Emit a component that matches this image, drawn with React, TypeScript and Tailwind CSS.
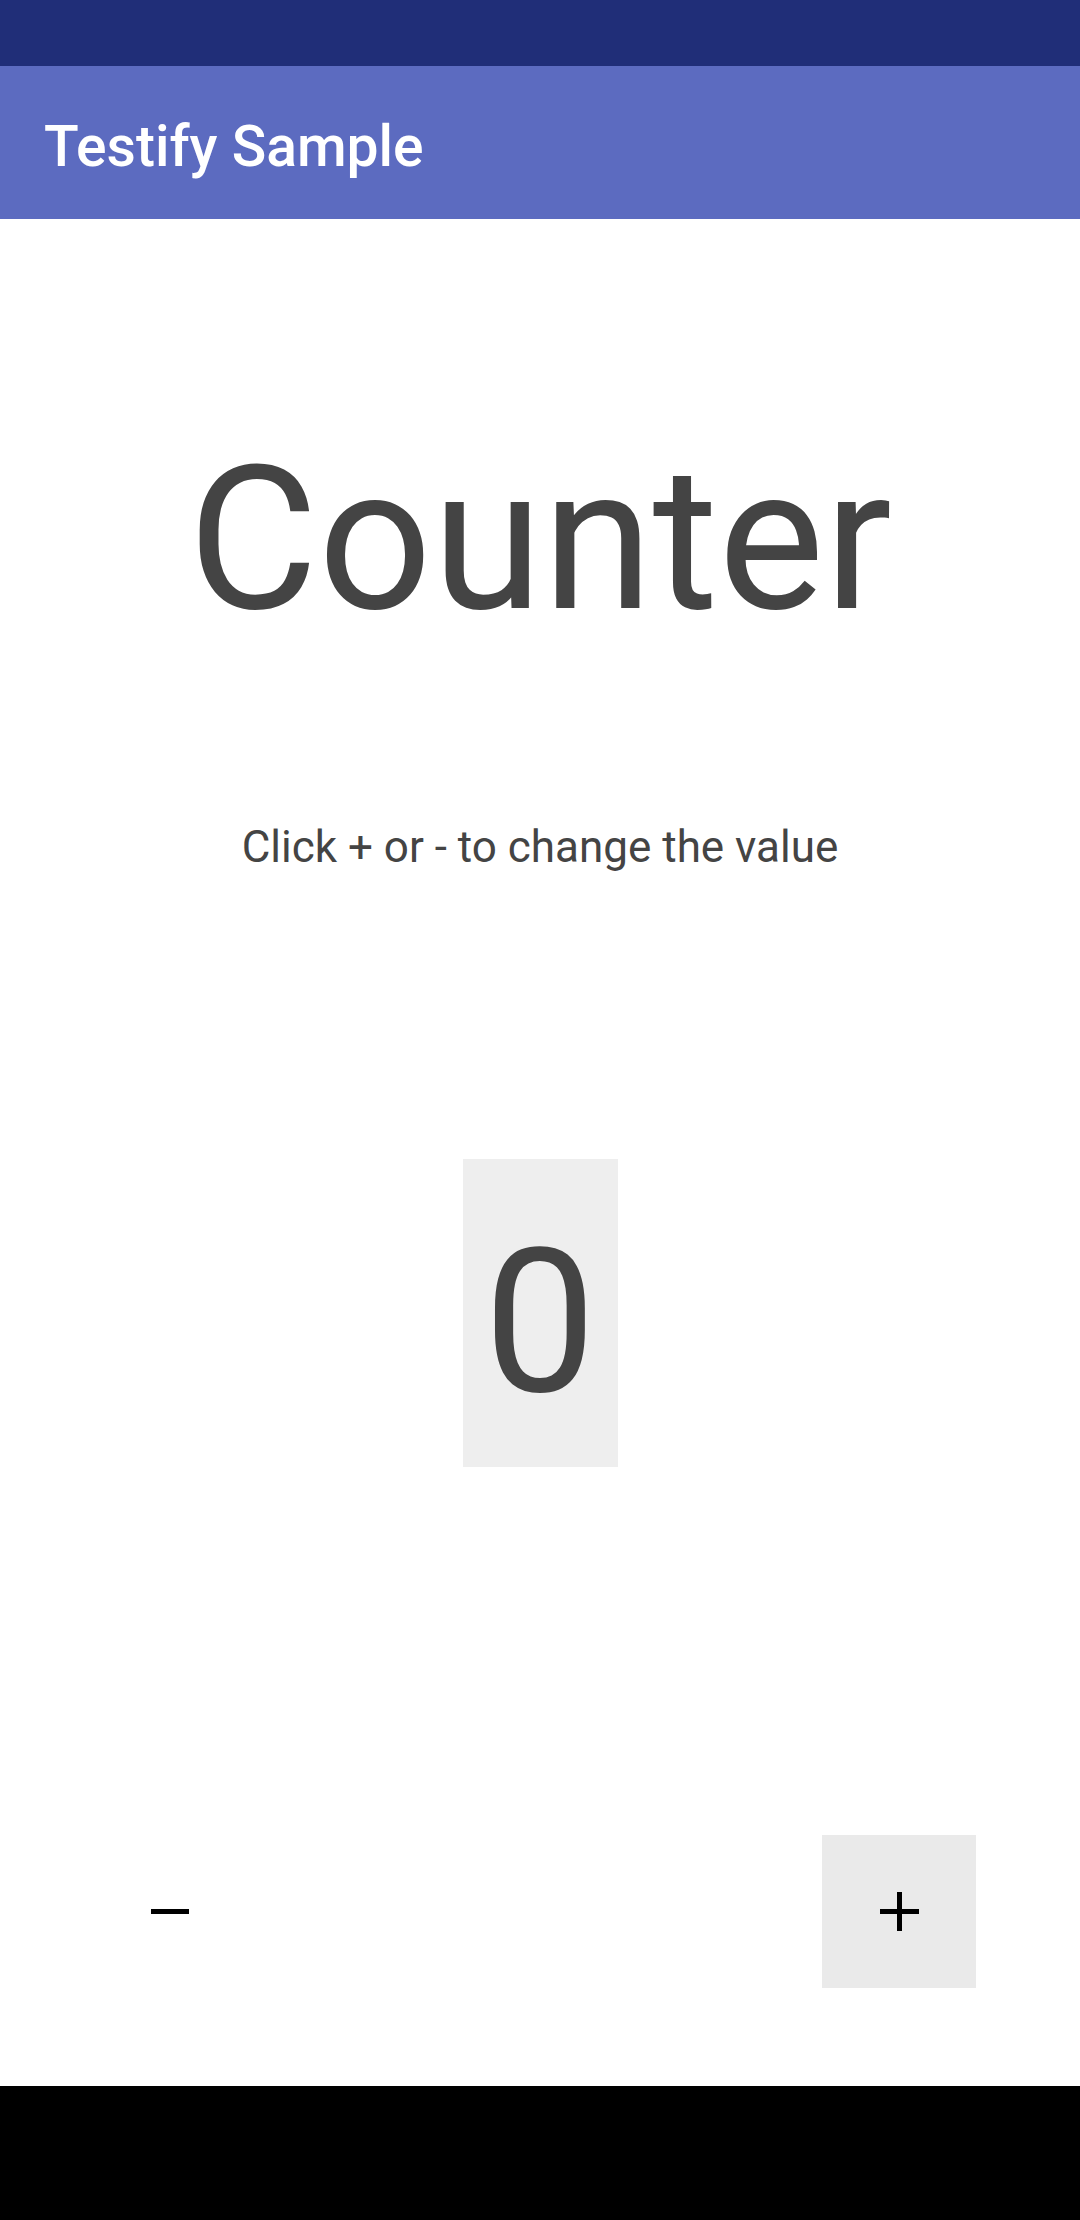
import { useState } from 'react'

export default function App() {
  const [count, setCount] = useState(0)

  return (
    <div className="flex h-[2220px] w-[1080px] flex-col bg-white font-['Roboto',sans-serif]">
      {/* status bar */}
      <div className="h-[66px] bg-[#202e78]" />

      {/* app bar */}
      <div className="h-[153px] bg-[#5c6bc0] pl-[44px] pt-[52px]">
        <h1 className="text-[57px] font-medium leading-none text-white">Testify Sample</h1>
      </div>

      <main className="flex flex-1 flex-col items-center">
        <div className="mt-[221px] text-[200px] leading-none text-[#444444]">Counter</div>

        <p className="mt-[185px] text-[44px] leading-none text-[#444444]">Click + or - to change the value</p>

        <div className="mt-[290px] flex h-[308px] w-[155px] items-center justify-center bg-[#eeeeee] pt-[20px]">
          <span className="text-[200px] leading-none text-[#444444]">{count}</span>
        </div>

        <div className="mt-[368px] flex w-full justify-between pl-[93px] pr-[104px]">
          <button
            onClick={() => setCount(count - 1)}
            className="flex h-[153px] w-[154px] items-center justify-center"
          >
            <span className="block h-[5px] w-[38px] bg-black" />
          </button>
          <button
            onClick={() => setCount(count + 1)}
            className="relative flex h-[153px] w-[154px] items-center justify-center bg-[#eaeaea]"
          >
            <span className="absolute h-[5px] w-[39px] bg-black" />
            <span className="absolute h-[39px] w-[5px] bg-black" />
          </button>
        </div>
      </main>

      {/* nav bar */}
      <div className="h-[134px] bg-black" />
    </div>
  )
}
